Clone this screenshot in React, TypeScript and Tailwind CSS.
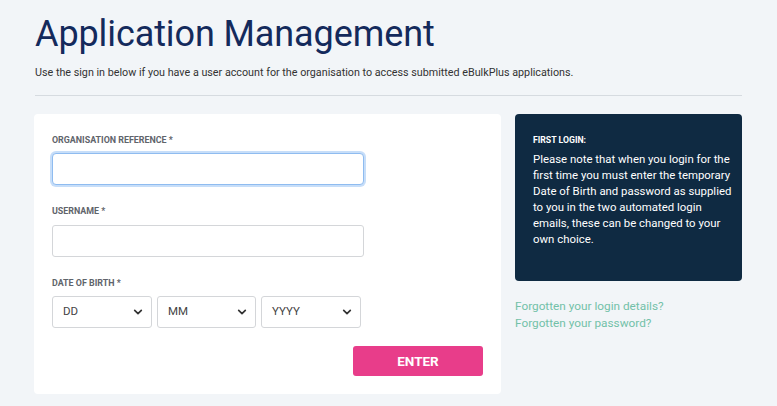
import React from "react";

function Chevron() {
  return (
    <svg width="12" height="12" viewBox="0 0 12 12" className="absolute right-[7px] top-1/2 -translate-y-1/2 pointer-events-none">
      <path d="M2.7 4.3 L6 7.6 L9.3 4.3" fill="none" stroke="#333" strokeWidth="1.7" strokeLinecap="round" strokeLinejoin="round" />
    </svg>
  );
}

function Select({ label, w }: { label: string; w: string }) {
  return (
    <div className={`relative h-[32px] ${w} rounded-[3px] border border-[#d4d6d9] bg-white flex items-center pl-[10px] text-[11.5px] text-[#444]`}>
      {label}
      <Chevron />
    </div>
  );
}

export default function App() {
  return (
    <div className="min-h-[406px] w-[777px] bg-[#f2f5f8] overflow-hidden" style={{ fontFamily: "Roboto, 'Liberation Sans', sans-serif" }}>
      <div className="pl-[35px] pr-[35px] pt-[12px]">
        <h1 className="text-[36px] leading-[44px] text-[#142a5c] font-normal tracking-[-0.1px]">Application Management</h1>
        <p className="mt-[10px] text-[10.75px] leading-[14px] text-[#333]">
          Use the sign in below if you have a user account for the organisation to access submitted eBulkPlus applications.
        </p>
        <div className="mt-[15px] h-px bg-[#d6dbe0]" />
        <div className="mt-[18px] flex gap-[14px] -ml-[1px]">
          <div className="w-[467px] h-[280px] bg-white rounded-[4px] pl-[18px] pt-[21px]">
            <div className="text-[8.9px] leading-[10px] font-bold text-[#5f646b]">ORGANISATION REFERENCE *</div>
            <div className="mt-[8px] w-[312px] h-[32px] rounded-[4px] border border-[#8fbcf0] shadow-[0_0_0_2px_#c7def9] bg-white" />
            <div className="mt-[21px] text-[8.9px] leading-[10px] font-bold text-[#5f646b]">USERNAME *</div>
            <div className="mt-[9px] w-[312px] h-[32px] rounded-[3px] border border-[#d4d6d9] bg-white" />
            <div className="mt-[21px] text-[8.9px] leading-[10px] font-bold text-[#5f646b]">DATE OF BIRTH *</div>
            <div className="mt-[8px] flex gap-[5px]">
              <Select label="DD" w="w-[100px]" />
              <Select label="MM" w="w-[99px]" />
              <Select label="YYYY" w="w-[100px]" />
            </div>
            <div className="mt-[18px] flex justify-end pr-[18px]">
              <button className="w-[130px] h-[30px] rounded-[3px] bg-[#e83d8a] text-white text-[13.5px] font-bold">ENTER</button>
            </div>
          </div>
          <div className="w-[227px]">
            <div className="h-[167px] bg-[#0f2a42] rounded-[4px] pl-[18px] pr-[9px] pt-[21px] text-white">
              <div className="text-[8.7px] leading-[10px] font-bold">FIRST LOGIN:</div>
              <p className="mt-[6px] text-[11.4px] leading-[16px]">
                Please note that when you login for the first time you must enter the temporary Date of Birth and password as supplied to you in the two automated login emails, these can be changed to your own choice.
              </p>
            </div>
            <div className="mt-[17px] text-[11.8px] leading-[17px] text-[#72c1a8]">
              <div>Forgotten your login details?</div>
              <div>Forgotten your password?</div>
            </div>
          </div>
        </div>
      </div>
    </div>
  );
}
